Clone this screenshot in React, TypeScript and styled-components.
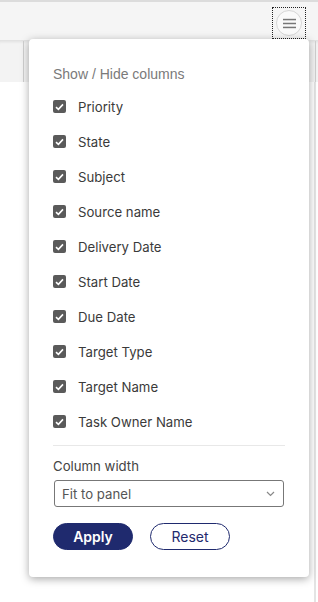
import React from "react";
import styled, { createGlobalStyle } from "styled-components";

const Global = createGlobalStyle`
  html, body { margin: 0; padding: 0; background: #fff; }
  body { font-family: Inter, "Noto Sans", sans-serif; }
  * { box-sizing: border-box; }
`;

const Page = styled.div`
  position: relative;
  width: 318px;
  height: 602px;
  overflow: hidden;
  background: #fff;
  display: flex;
  flex-direction: column;
`;

const TopBorder = styled.div`
  height: 2px;
  background: #dcdcdc;
`;

const Toolbar = styled.div`
  height: 38px;
  background: #f5f5f5;
  display: flex;
  justify-content: flex-end;
  align-items: center;
  padding-right: 12px;
`;

const HeaderRow = styled.div`
  height: 42px;
  background: #f3f3f3;
  display: grid;
  grid-template-columns: 24px 1fr 2px;
  border-top: 1px solid #e2e2e2;
  box-shadow: inset 0 3px 3px -2px rgba(0,0,0,0.08);
`;

const HeaderCell = styled.div<{ $line?: boolean }>`
  border-right: ${(p) => (p.$line ? "1px solid #cfcfcf" : "none")};
`;

const Body = styled.div`
  flex: 1;
  display: grid;
  grid-template-columns: 1fr 2px 2px;
`;

const ScrollTrack = styled.div`
  background: #e4e4e4;
`;

const MenuFocus = styled.div`
  width: 34px;
  height: 32px;
  border: 1px dotted #222;
  display: flex;
  align-items: center;
  justify-content: center;
  margin-top: 4px;
`;

const MenuButton = styled.button`
  width: 26px;
  height: 26px;
  border-radius: 50%;
  border: 1px solid #d6d6d6;
  background: #fafafa;
  padding: 0;
  display: flex;
  align-items: center;
  justify-content: center;
`;

const Popup = styled.div`
  position: absolute;
  left: 29px;
  top: 39px;
  width: 280px;
  height: 538px;
  background: #fff;
  border-radius: 4px;
  box-shadow: 0 2px 8px rgba(0,0,0,0.35);
  padding: 27px 24px 0 24px;
  display: flex;
  flex-direction: column;
`;

const Title = styled.div`
  font-family: "Liberation Sans", Arial, sans-serif;
  font-size: 14px;
  color: #7a7a7a;
  line-height: 16px;
  margin-bottom: 7px;
`;

const List = styled.div`
  display: flex;
  flex-direction: column;
`;

const Row = styled.label`
  display: flex;
  align-items: center;
  height: 35px;
  gap: 12px;
  font-size: 13.2px;
  color: #3a3a3a;
`;

const Box = styled.span`
  width: 13px;
  height: 13px;
  border-radius: 2px;
  background: #5a5a5a;
  display: flex;
  align-items: center;
  justify-content: center;
`;

const Divider = styled.div`
  height: 1px;
  background: #e8e8e8;
  margin: 6px 0 12px 0;
`;

const FieldLabel = styled.div`
  font-size: 13.2px;
  color: #444;
  line-height: 17px;
  margin-bottom: 5px;
`;

const Select = styled.div`
  height: 27px;
  margin-left: 1px;
  width: 230px;
  border: 1px solid #777;
  border-radius: 3px;
  display: flex;
  align-items: center;
  justify-content: space-between;
  padding: 0 8px 0 7px;
  font-size: 13.2px;
  color: #555;
`;

const Buttons = styled.div`
  display: flex;
  gap: 17px;
  margin-top: 16px;
`;

const Btn = styled.button<{ $primary?: boolean }>`
  width: 80px;
  height: 27px;
  border-radius: 14px;
  border: 1px solid #1f2a6e;
  background: ${(p) => (p.$primary ? "#1f2a6e" : "#fff")};
  color: ${(p) => (p.$primary ? "#fff" : "#1f2a6e")};
  font-family: Inter, sans-serif;
  font-size: 14px;
  font-weight: ${(p) => (p.$primary ? 600 : 400)};
  padding: 0;
`;

const cols = [
  "Priority",
  "State",
  "Subject",
  "Source name",
  "Delivery Date",
  "Start Date",
  "Due Date",
  "Target Type",
  "Target Name",
  "Task Owner Name",
];

export default function App() {
  return (
    <Page>
      <Global />
      <TopBorder />
      <Toolbar>
        <MenuFocus>
          <MenuButton aria-label="menu">
            <svg width="13" height="11" viewBox="0 0 13 11">
              <rect x="0" y="0.8" width="13" height="1.5" fill="#777" />
              <rect x="0" y="4.75" width="13" height="1.5" fill="#777" />
              <rect x="0" y="8.7" width="13" height="1.5" fill="#777" />
            </svg>
          </MenuButton>
        </MenuFocus>
      </Toolbar>
      <HeaderRow>
        <HeaderCell $line />
        <HeaderCell $line />
        <HeaderCell />
      </HeaderRow>
      <Body>
        <div />
        <ScrollTrack />
        <div />
      </Body>
      <Popup>
        <Title>Show / Hide columns</Title>
        <List>
          {cols.map((c) => (
            <Row key={c}>
              <Box>
                <svg width="9" height="8" viewBox="0 0 9 8">
                  <path d="M1 4.2 L3.4 6.4 L8 1.4" stroke="#fff" strokeWidth="1.6" fill="none" />
                </svg>
              </Box>
              {c}
            </Row>
          ))}
        </List>
        <Divider />
        <FieldLabel>Column width</FieldLabel>
        <Select>
          <span>Fit to panel</span>
          <svg width="9" height="6" viewBox="0 0 9 6">
            <path d="M1 1 L4.5 4.5 L8 1" stroke="#888" strokeWidth="1.2" fill="none" />
          </svg>
        </Select>
        <Buttons>
          <Btn $primary>Apply</Btn>
          <Btn>Reset</Btn>
        </Buttons>
      </Popup>
    </Page>
  );
}
